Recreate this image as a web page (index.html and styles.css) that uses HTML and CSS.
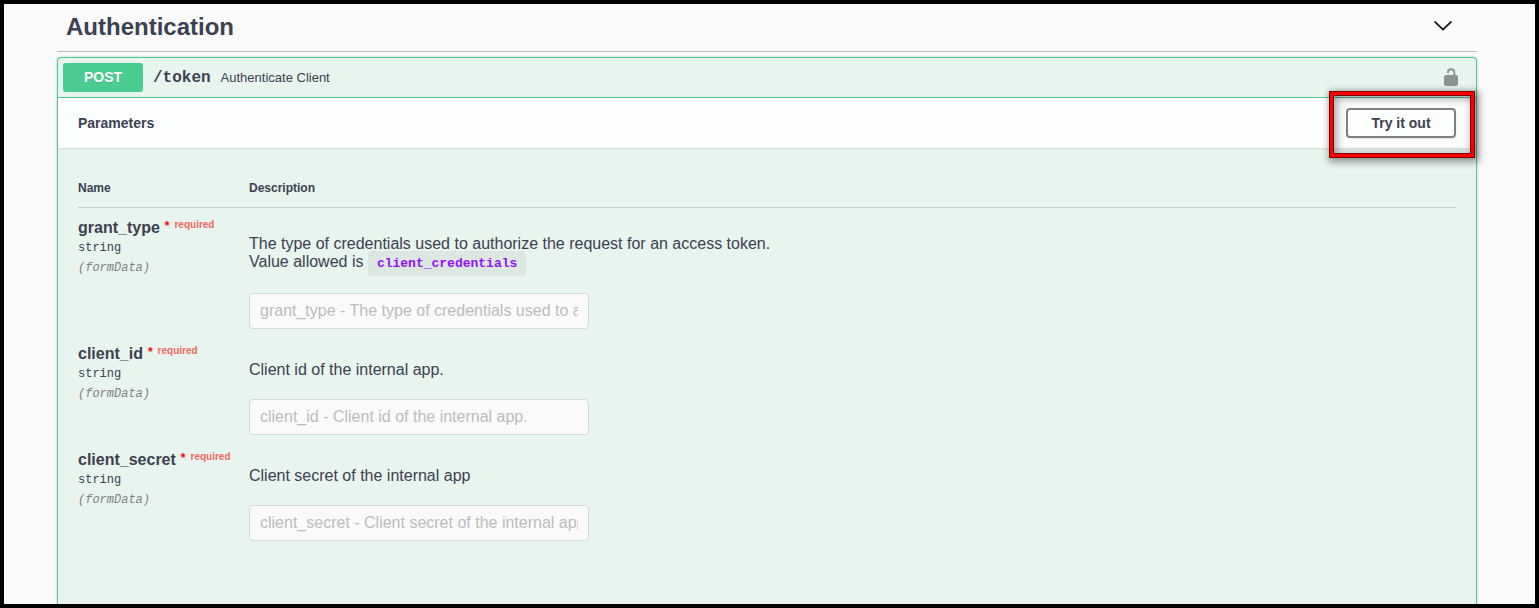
FILE: index.html
```html
<!DOCTYPE html>
<html lang="en">
<head>
<meta charset="utf-8">
<title>Authentication</title>
<link rel="stylesheet" href="styles.css">
</head>
<body>
<main class="page">
  <header class="tag">
    <h1 class="tag-title">Authentication</h1>
    <button class="icon-button tag-toggle" aria-label="Collapse section">
      <svg width="20" height="20" viewBox="0 0 20 20" fill="none" stroke="#111" stroke-width="1.7" stroke-linecap="round" stroke-linejoin="round"><path d="M2 4.8 10 12.6 18 4.8"/></svg>
    </button>
  </header>
  <section class="operation">
    <div class="summary">
      <span class="method">POST</span>
      <a class="path" href="#token">/token</a>
      <span class="summary-text">Authenticate Client</span>
      <button class="icon-button lock" aria-label="Authorize">
        <svg width="16" height="20" viewBox="0 0 16 20"><rect x="1" y="7" width="14" height="11" rx="2" fill="#8b958f"/><path d="M5 5V4.2A3 3 0 0 1 8 1.2h.3a3 3 0 0 1 3 3V8" fill="none" stroke="#8b958f" stroke-width="2"/></svg>
      </button>
    </div>
    <div class="section-header">
      <h2 class="section-title">Parameters</h2>
      <div class="try">
        <button class="try-button">Try it out</button>
        <span class="highlight"></span>
      </div>
    </div>
    <div class="parameters">
      <table class="table">
        <thead>
          <tr><th class="name-col">Name</th><th>Description</th></tr>
        </thead>
        <tbody>
          <tr>
            <td>
              <label class="param-name" for="grant_type">grant_type<span class="star">*</span><span class="required">required</span></label>
              <div class="param-type">string</div>
              <div class="param-in">(formData)</div>
            </td>
            <td>
              <p class="description">The type of credentials used to authorize the request for an access token.<br>Value allowed is <code class="code">client_credentials</code></p>
              <input class="field" id="grant_type" type="text" disabled placeholder="grant_type - The type of credentials used to authorize the request">
            </td>
          </tr>
          <tr>
            <td>
              <label class="param-name" for="client_id">client_id<span class="star">*</span><span class="required">required</span></label>
              <div class="param-type">string</div>
              <div class="param-in">(formData)</div>
            </td>
            <td>
              <p class="description">Client id of the internal app.</p>
              <input class="field" id="client_id" type="text" disabled placeholder="client_id - Client id of the internal app.">
            </td>
          </tr>
          <tr>
            <td>
              <label class="param-name" for="client_secret">client_secret<span class="star">*</span><span class="required">required</span></label>
              <div class="param-type">string</div>
              <div class="param-in">(formData)</div>
            </td>
            <td>
              <p class="description">Client secret of the internal app</p>
              <input class="field" id="client_secret" type="text" disabled placeholder="client_secret - Client secret of the internal app">
            </td>
          </tr>
        </tbody>
      </table>
    </div>
  </section>
</main>
</body>
</html>
```
FILE: styles.css
```css
* {
  box-sizing: border-box;
}

body {
  margin: 0;
  background: #fafafa;
  color: #3b4151;
  font-family: "Liberation Sans", Arial, sans-serif;
}

.page {
  display: flex;
  flex-direction: column;
  min-height: 100vh;
  padding: 0 58px 0 53px;
  border: 4px solid #000;
  overflow: hidden;
}

.tag {
  display: flex;
  align-items: center;
  justify-content: space-between;
  height: 48px;
  margin-bottom: 5px;
  padding: 0 24px 2px 9px;
  border-bottom: 1px solid #bcbdc0;
}

.tag-title {
  margin: 0;
  font-size: 24px;
  line-height: 28px;
}

.icon-button {
  display: flex;
  padding: 0;
  border: 0;
  background: none;
}

.operation {
  flex: 1;
  border: 1px solid #49cc90;
  border-bottom: 0;
  border-radius: 4px 4px 0 0;
  background: #e8f4ee;
  box-shadow: 0 0 3px rgba(0, 0, 0, 0.19);
}

.summary {
  display: flex;
  align-items: center;
  height: 40px;
  padding: 0 17px 0 5px;
  border-bottom: 1px solid #49cc90;
}

.method {
  width: 80px;
  border-radius: 3px;
  background: #49cc90;
  color: #fff;
  font-size: 14px;
  font-weight: 700;
  line-height: 29px;
  text-align: center;
  text-shadow: 0 1px 0 rgba(0, 0, 0, 0.1);
}

.path {
  padding: 0 10px;
  color: #3b4151;
  font-family: "Liberation Mono", "Courier New", monospace;
  font-size: 16px;
  font-weight: 700;
  text-decoration: none;
}

.summary-text {
  font-size: 13px;
}

.lock {
  margin-left: auto;
}

.section-header {
  display: flex;
  align-items: center;
  justify-content: space-between;
  height: 50px;
  padding: 0 20px;
  background: rgba(255, 255, 255, 0.85);
  box-shadow: 0 1px 2px rgba(0, 0, 0, 0.1);
}

.section-title {
  margin: 0;
  font-size: 14px;
}

.try {
  position: relative;
}

.try-button {
  display: block;
  width: 110px;
  height: 30px;
  border: 2px solid #808080;
  border-radius: 4px;
  background: transparent;
  box-shadow: 0 1px 2px rgba(0, 0, 0, 0.1);
  color: #3b4151;
  font-family: inherit;
  font-size: 14px;
  font-weight: 700;
}

.highlight {
  position: absolute;
  inset: -17px -19px -20px -17px;
  border: 1px solid #7a0000;
  box-shadow:
    inset 0 0 0 3px #f00,
    inset 0 0 0 4px #7a0000,
    inset 2px 2px 10px 4px rgba(0, 0, 0, 0.4),
    2px 2px 7px 2px rgba(0, 0, 0, 0.4);
  pointer-events: none;
}

.parameters {
  padding: 20px;
}

.table {
  width: 100%;
  border-collapse: collapse;
}

.table th {
  padding: 13px 0 12px;
  border-bottom: 1px solid #c4d0cb;
  font-size: 12px;
  line-height: 14px;
  text-align: left;
}

.table .name-col {
  width: 171px;
}

.table td {
  padding: 10px 0 0;
  vertical-align: top;
}

.param-name {
  display: block;
  font-size: 16px;
  font-weight: 700;
  line-height: 20px;
}

.star {
  padding: 0 5px;
  color: #f00;
  font-size: 12px;
  vertical-align: 3px;
  line-height: 10px;
}

.required {
  color: #f5675f;
  font-size: 10px;
  line-height: 10px;
  vertical-align: 5px;
}

.param-type,
.param-in {
  font-family: "Liberation Mono", "Courier New", monospace;
  font-size: 12px;
  line-height: 20px;
}

.param-in {
  color: #808080;
  font-style: italic;
}

.description {
  margin: 17px 0 20px;
  font-size: 16px;
  line-height: 18px;
}

.code {
  padding: 5px 9px;
  border-radius: 4px;
  background: rgba(0, 0, 0, 0.05);
  color: #9012fe;
  font-family: "Liberation Mono", "Courier New", monospace;
  font-size: 13px;
  font-weight: 700;
}

.field {
  display: block;
  width: 340px;
  height: 36px;
  margin: 5px 0;
  padding: 0 10px;
  border: 1px solid #d5dad8;
  border-radius: 4px;
  background: #fafafa;
  font-family: inherit;
  font-size: 16px;
}

.field::placeholder {
  color: #bcbcbc;
}
```
